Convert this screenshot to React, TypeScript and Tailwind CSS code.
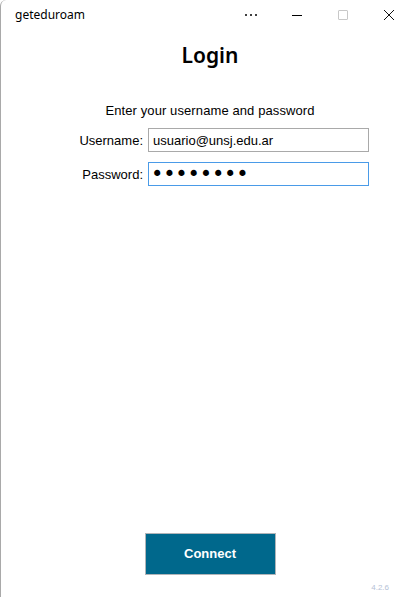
import { useState } from 'react';

export default function App() {
  const [username, setUsername] = useState('usuario@unsj.edu.ar');
  const [password, setPassword] = useState('12345678');

  return (
    <div className="w-[419px] h-[597px] bg-white flex flex-col border-l border-[#a9a9a9] rounded-tl-[6px] overflow-hidden relative font-['Noto_Sans',sans-serif] text-black">
      {/* title bar */}
      <div className="h-[30px] flex items-center shrink-0">
        <span className="pl-[14px] text-[12px] leading-none flex-1">geteduroam</span>
        <div className="flex items-center h-full mr-[7px]">
          <div className="w-[46px] h-full flex items-center justify-center gap-[3px] ml-[3px]">
            <span className="w-[2px] h-[2px] bg-black rounded-full" />
            <span className="w-[2px] h-[2px] bg-black rounded-full" />
            <span className="w-[2px] h-[2px] bg-black rounded-full" />
          </div>
          <div className="w-[46px] h-full flex items-center justify-center">
            <span className="w-[10px] h-px bg-black" />
          </div>
          <div className="w-[46px] h-full flex items-center justify-center">
            <span className="w-[10px] h-[10px] border border-[#c8c8c8] rounded-[1px]" />
          </div>
          <div className="w-[46px] h-full flex items-center justify-center">
            <svg width="12" height="12" viewBox="0 0 12 12" fill="none" stroke="#111" strokeWidth="1">
              <path d="M1 1 L11 11 M11 1 L1 11" />
            </svg>
          </div>
        </div>
      </div>

      <h1 className="text-center text-[21px] font-semibold leading-none mt-[15px]">Login</h1>

      <p className="text-center font-['Liberation_Sans',sans-serif] text-[13px] tracking-[0.1px] leading-none mt-[38px]">
        Enter your username and password
      </p>

      <div className="grid grid-cols-[147px_221px] gap-y-[10px] mt-[11px] font-['Liberation_Sans',sans-serif] text-[13px]">
        <label className="text-right pr-[5px] self-center leading-none">Username:</label>
        <input
          value={username}
          onChange={(e) => setUsername(e.target.value)}
          className="h-[24px] border border-[#a9a9a9] px-[4px] outline-none text-[13px]"
        />
        <label className="text-right pr-[5px] self-center leading-none">Password:</label>
        <input
          type="password"
          value={password}
          onChange={(e) => setPassword(e.target.value)}
          className="h-[24px] border border-[#4a9be8] px-[2px] outline-none text-[21px] leading-none tracking-[-0.2px] font-['DejaVu_Sans',sans-serif]"
        />
      </div>

      <div className="flex-1" />

      <div className="flex justify-center mb-[22px]">
        <button className="w-[131px] h-[42px] bg-[#00688c] border border-[#b0b4b8] text-white font-['Liberation_Sans',sans-serif] font-bold text-[13px]">
          Connect
        </button>
      </div>

      <span className="absolute right-[30px] bottom-[5px] text-[8px] leading-none text-[#b5c2d6] font-['Liberation_Sans',sans-serif]">
        4.2.6
      </span>
    </div>
  );
}
